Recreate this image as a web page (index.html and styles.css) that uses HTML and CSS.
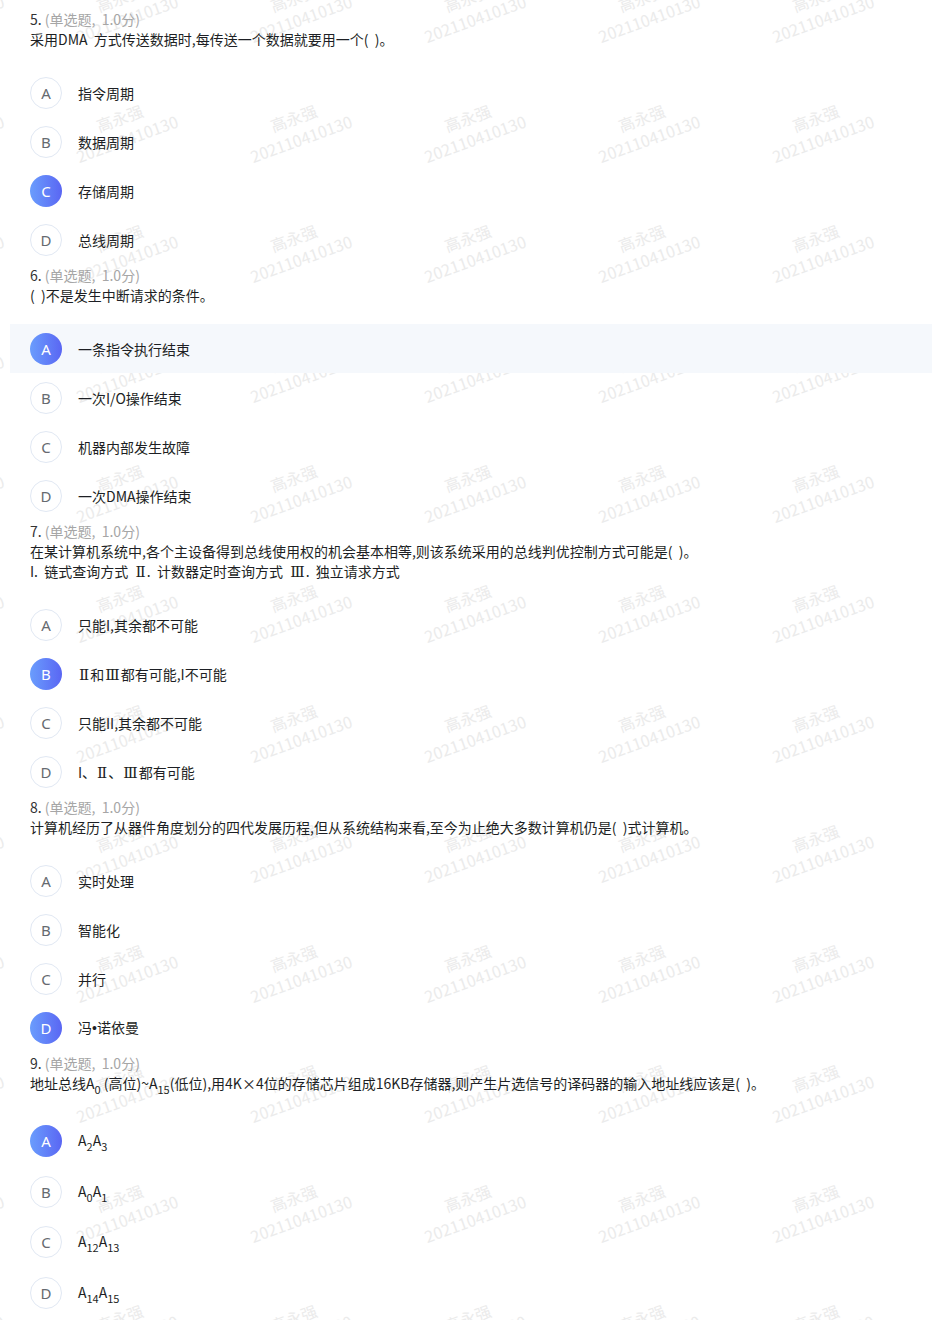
FILE: index.html
```html
<!DOCTYPE html>
<html lang="zh-CN">
<head>
<meta charset="utf-8">
<title>单选题</title>
<link rel="stylesheet" href="styles.css">
</head>
<body>
<div class="page">
  <div class="watermark" aria-hidden="true">
    <div class="wm-grid">
      <div class="wm"><span>高永强<br>202110410130</span></div><div class="wm"><span>高永强<br>202110410130</span></div><div class="wm"><span>高永强<br>202110410130</span></div><div class="wm"><span>高永强<br>202110410130</span></div><div class="wm"><span>高永强<br>202110410130</span></div><div class="wm"><span>高永强<br>202110410130</span></div><div class="wm"><span>高永强<br>202110410130</span></div>
      <div class="wm"><span>高永强<br>202110410130</span></div><div class="wm"><span>高永强<br>202110410130</span></div><div class="wm"><span>高永强<br>202110410130</span></div><div class="wm"><span>高永强<br>202110410130</span></div><div class="wm"><span>高永强<br>202110410130</span></div><div class="wm"><span>高永强<br>202110410130</span></div><div class="wm"><span>高永强<br>202110410130</span></div>
      <div class="wm"><span>高永强<br>202110410130</span></div><div class="wm"><span>高永强<br>202110410130</span></div><div class="wm"><span>高永强<br>202110410130</span></div><div class="wm"><span>高永强<br>202110410130</span></div><div class="wm"><span>高永强<br>202110410130</span></div><div class="wm"><span>高永强<br>202110410130</span></div><div class="wm"><span>高永强<br>202110410130</span></div>
      <div class="wm"><span>高永强<br>202110410130</span></div><div class="wm"><span>高永强<br>202110410130</span></div><div class="wm"><span>高永强<br>202110410130</span></div><div class="wm"><span>高永强<br>202110410130</span></div><div class="wm"><span>高永强<br>202110410130</span></div><div class="wm"><span>高永强<br>202110410130</span></div><div class="wm"><span>高永强<br>202110410130</span></div>
      <div class="wm"><span>高永强<br>202110410130</span></div><div class="wm"><span>高永强<br>202110410130</span></div><div class="wm"><span>高永强<br>202110410130</span></div><div class="wm"><span>高永强<br>202110410130</span></div><div class="wm"><span>高永强<br>202110410130</span></div><div class="wm"><span>高永强<br>202110410130</span></div><div class="wm"><span>高永强<br>202110410130</span></div>
      <div class="wm"><span>高永强<br>202110410130</span></div><div class="wm"><span>高永强<br>202110410130</span></div><div class="wm"><span>高永强<br>202110410130</span></div><div class="wm"><span>高永强<br>202110410130</span></div><div class="wm"><span>高永强<br>202110410130</span></div><div class="wm"><span>高永强<br>202110410130</span></div><div class="wm"><span>高永强<br>202110410130</span></div>
      <div class="wm"><span>高永强<br>202110410130</span></div><div class="wm"><span>高永强<br>202110410130</span></div><div class="wm"><span>高永强<br>202110410130</span></div><div class="wm"><span>高永强<br>202110410130</span></div><div class="wm"><span>高永强<br>202110410130</span></div><div class="wm"><span>高永强<br>202110410130</span></div><div class="wm"><span>高永强<br>202110410130</span></div>
      <div class="wm"><span>高永强<br>202110410130</span></div><div class="wm"><span>高永强<br>202110410130</span></div><div class="wm"><span>高永强<br>202110410130</span></div><div class="wm"><span>高永强<br>202110410130</span></div><div class="wm"><span>高永强<br>202110410130</span></div><div class="wm"><span>高永强<br>202110410130</span></div><div class="wm"><span>高永强<br>202110410130</span></div>
      <div class="wm"><span>高永强<br>202110410130</span></div><div class="wm"><span>高永强<br>202110410130</span></div><div class="wm"><span>高永强<br>202110410130</span></div><div class="wm"><span>高永强<br>202110410130</span></div><div class="wm"><span>高永强<br>202110410130</span></div><div class="wm"><span>高永强<br>202110410130</span></div><div class="wm"><span>高永强<br>202110410130</span></div>
      <div class="wm"><span>高永强<br>202110410130</span></div><div class="wm"><span>高永强<br>202110410130</span></div><div class="wm"><span>高永强<br>202110410130</span></div><div class="wm"><span>高永强<br>202110410130</span></div><div class="wm"><span>高永强<br>202110410130</span></div><div class="wm"><span>高永强<br>202110410130</span></div><div class="wm"><span>高永强<br>202110410130</span></div>
      <div class="wm"><span>高永强<br>202110410130</span></div><div class="wm"><span>高永强<br>202110410130</span></div><div class="wm"><span>高永强<br>202110410130</span></div><div class="wm"><span>高永强<br>202110410130</span></div><div class="wm"><span>高永强<br>202110410130</span></div><div class="wm"><span>高永强<br>202110410130</span></div><div class="wm"><span>高永强<br>202110410130</span></div>
      <div class="wm"><span>高永强<br>202110410130</span></div><div class="wm"><span>高永强<br>202110410130</span></div><div class="wm"><span>高永强<br>202110410130</span></div><div class="wm"><span>高永强<br>202110410130</span></div><div class="wm"><span>高永强<br>202110410130</span></div><div class="wm"><span>高永强<br>202110410130</span></div><div class="wm"><span>高永强<br>202110410130</span></div>
    </div>
  </div>

  <div class="questions">
    <section class="question">
      <div class="q-head"><span class="q-num">5.</span> <span class="q-type">(单选题,&nbsp; 1.0分)</span></div>
      <div class="q-text">采用DMA&nbsp; 方式传送数据时,每传送一个数据就要用一个(&nbsp; )。</div>
      <ul class="options">
        <li class="opt"><span class="letter">A</span><span class="opt-text">指令周期</span></li>
        <li class="opt"><span class="letter">B</span><span class="opt-text">数据周期</span></li>
        <li class="opt"><span class="letter selected">C</span><span class="opt-text">存储周期</span></li>
        <li class="opt"><span class="letter">D</span><span class="opt-text">总线周期</span></li>
      </ul>
    </section>

    <section class="question">
      <div class="q-head"><span class="q-num">6.</span> <span class="q-type">(单选题,&nbsp; 1.0分)</span></div>
      <div class="q-text">(&nbsp; )不是发生中断请求的条件。</div>
      <ul class="options">
        <li class="opt opt-active"><span class="letter selected">A</span><span class="opt-text">一条指令执行结束</span></li>
        <li class="opt"><span class="letter">B</span><span class="opt-text">一次I/O操作结束</span></li>
        <li class="opt"><span class="letter">C</span><span class="opt-text">机器内部发生故障</span></li>
        <li class="opt"><span class="letter">D</span><span class="opt-text">一次DMA操作结束</span></li>
      </ul>
    </section>

    <section class="question">
      <div class="q-head"><span class="q-num">7.</span> <span class="q-type">(单选题,&nbsp; 1.0分)</span></div>
      <div class="q-text">在某计算机系统中,各个主设备得到总线使用权的机会基本相等,则该系统采用的总线判优控制方式可能是(&nbsp; )。<br>I.&nbsp; 链式查询方式&nbsp; <span class="roman">Ⅱ</span>.&nbsp; 计数器定时查询方式&nbsp; <span class="roman">Ⅲ</span>.&nbsp; 独立请求方式</div>
      <ul class="options">
        <li class="opt"><span class="letter">A</span><span class="opt-text">只能I,其余都不可能</span></li>
        <li class="opt"><span class="letter selected">B</span><span class="opt-text"><span class="roman">Ⅱ</span>和<span class="roman">Ⅲ</span>都有可能,I不可能</span></li>
        <li class="opt"><span class="letter">C</span><span class="opt-text">只能II,其余都不可能</span></li>
        <li class="opt"><span class="letter">D</span><span class="opt-text">I、<span class="roman">Ⅱ</span>、<span class="roman">Ⅲ</span>都有可能</span></li>
      </ul>
    </section>

    <section class="question">
      <div class="q-head"><span class="q-num">8.</span> <span class="q-type">(单选题,&nbsp; 1.0分)</span></div>
      <div class="q-text">计算机经历了从器件角度划分的四代发展历程,但从系统结构来看,至今为止绝大多数计算机仍是(&nbsp; )式计算机。</div>
      <ul class="options">
        <li class="opt"><span class="letter">A</span><span class="opt-text">实时处理</span></li>
        <li class="opt"><span class="letter">B</span><span class="opt-text">智能化</span></li>
        <li class="opt"><span class="letter">C</span><span class="opt-text">并行</span></li>
        <li class="opt"><span class="letter selected">D</span><span class="opt-text">冯<span class="dot">•</span>诺依曼</span></li>
      </ul>
    </section>

    <section class="question">
      <div class="q-head"><span class="q-num">9.</span> <span class="q-type">(单选题,&nbsp; 1.0分)</span></div>
      <div class="q-text">地址总线A<sub>0</sub> (高位)~A<sub>15</sub>(低位),用4K×4位的存储芯片组成16KB存储器,则产生片选信号的译码器的输入地址线应该是(&nbsp; )。</div>
      <ul class="options options-sub">
        <li class="opt"><span class="letter selected">A</span><span class="opt-text">A<sub>2</sub>A<sub>3</sub></span></li>
        <li class="opt"><span class="letter">B</span><span class="opt-text">A<sub>0</sub>A<sub>1</sub></span></li>
        <li class="opt"><span class="letter">C</span><span class="opt-text">A<sub>12</sub>A<sub>13</sub></span></li>
        <li class="opt"><span class="letter">D</span><span class="opt-text">A<sub>14</sub>A<sub>15</sub></span></li>
      </ul>
    </section>
  </div>
</div>
</body>
</html>
```

FILE: styles.css
```css
html, body {
  margin: 0;
  padding: 0;
  background: #ffffff;
}

body {
  font-family: "Noto Sans CJK SC", "Noto Sans", sans-serif;
  font-size: 14px;
  color: #1d1f24;
}

.page {
  position: relative;
  min-height: 1320px;
  overflow: hidden;
  padding: 9px 0 0 10px;
  box-sizing: border-box;
}

/* watermark layer lies under the content */
.watermark {
  position: absolute;
  inset: 0;
  overflow: hidden;
  pointer-events: none;
}

.wm-grid {
  position: absolute;
  left: -138px;
  top: -52px;
  display: grid;
  grid-template-columns: repeat(7, 174px);
  grid-auto-rows: 120px;
}

.wm {
  display: flex;
  align-items: center;
  justify-content: center;
}

.wm span {
  display: block;
  text-align: center;
  font-family: "Noto Sans CJK SC", sans-serif;
  font-size: 16px;
  line-height: 22px;
  color: #ebebeb;
  transform: rotate(-20deg);
  white-space: nowrap;
}

.questions {
  position: relative;
  z-index: 1;
}

.question {
  padding-bottom: 1px;
}

.q-head,
.q-text {
  padding-left: 20px;
  line-height: 20px;
}

.q-num {
  color: #333;
}

.q-type {
  color: #a6a6a6;
}

.q-text {
  color: #1d1f24;
}

.roman {
  font-family: "DejaVu Serif", "Liberation Serif", serif;
  font-size: 15px;
  line-height: 1;
  padding: 0 1px;
}

.dot {
  font-family: "Liberation Sans", sans-serif;
}

sub {
  font-size: 11px;
  vertical-align: -5px;
  line-height: 1;
}

.options {
  list-style: none;
  margin: 19px 0 0 0;
  padding: 0;
}

.options-sub {
  margin-top: 21px;
}

.opt {
  display: flex;
  align-items: center;
  gap: 16px;
  height: 49px;
  padding: 0 20px;
  box-sizing: border-box;
}

.options-sub .opt {
  height: 50.5px;
}

.opt-active {
  background: #f5f8fc;
}

.letter {
  flex: none;
  width: 32px;
  height: 32px;
  border-radius: 50%;
  border: 1px solid #e1e8f3;
  box-sizing: border-box;
  display: flex;
  align-items: center;
  justify-content: center;
  font-family: "Noto Sans", sans-serif;
  font-size: 15px;
  color: #666a70;
  background: #fff;
}

.letter.selected {
  border: none;
  color: #fff;
  background: linear-gradient(to right, #6a9dfd, #5a66f3);
}

.opt-text {
  line-height: 20px;
  color: #1d1f24;
}
```
